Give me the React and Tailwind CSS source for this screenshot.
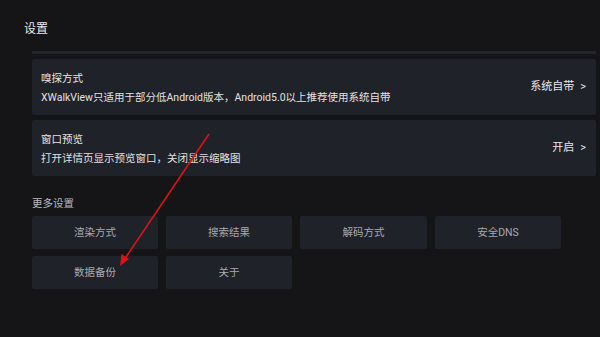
import React from 'react';

const font = { fontFamily: 'Roboto, "Noto Sans CJK SC", sans-serif' };

function SettingCard({ title, desc, value }) {
  return (
    <div className="flex items-center justify-between h-[56px] bg-[#20222a] rounded-[2px] pl-[9px] pr-[10px]">
      <div className="flex flex-col gap-[3px] pt-[2px]">
        <div className="text-[10.5px] leading-[16px] text-[#e6e6e8]">{title}</div>
        <div className="text-[10.5px] leading-[16px] text-[#e0e0e2]">{desc}</div>
      </div>
      <div className="text-[11px] text-[#e6e6e8] flex items-center gap-[6px]">
        <span>{value}</span>
        <span>&gt;</span>
      </div>
    </div>
  );
}

function GridButton({ label }) {
  return (
    <div className="h-[33px] bg-[#20222a] rounded-[2px] flex items-center justify-center text-[10.5px] text-[#a8a8ae]">
      {label}
    </div>
  );
}

export default function App() {
  return (
    <div className="relative w-[600px] h-[337px] bg-[#151518] overflow-hidden" style={font}>
      <div className="pl-[24px] pt-[20px] text-[12px] leading-[18px] text-[#e8e8ea]">设置</div>
      <div className="pl-[32px] pr-[4px] mt-[13px]">
        <div className="h-[3px] bg-[#23242c]" />
        <div className="mt-[5px] flex flex-col gap-[5px]">
          <SettingCard
            title="嗅探方式"
            desc="XWalkView只适用于部分低Android版本，Android5.0以上推荐使用系统自带"
            value="系统自带"
          />
          <SettingCard title="窗口预览" desc="打开详情页显示预览窗口，关闭显示缩略图" value="开启" />
        </div>
        <div className="mt-[20px] text-[10.5px] leading-[16px] text-[#b8b8bc]">更多设置</div>
        <div className="mt-[4px] grid grid-cols-[126px_126px_127px_126px] gap-x-[8px] gap-y-[7px]">
          <GridButton label="渲染方式" />
          <GridButton label="搜索结果" />
          <GridButton label="解码方式" />
          <GridButton label="安全DNS" />
          <GridButton label="数据备份" />
          <GridButton label="关于" />
        </div>
      </div>
      <svg className="absolute left-0 top-0 pointer-events-none" width="600" height="337">
        <line x1="209" y1="134" x2="124" y2="260" stroke="#d81414" strokeWidth="1.6" />
        <polygon points="120,266 121.5,254 129,259" fill="#d81414" />
      </svg>
    </div>
  );
}
